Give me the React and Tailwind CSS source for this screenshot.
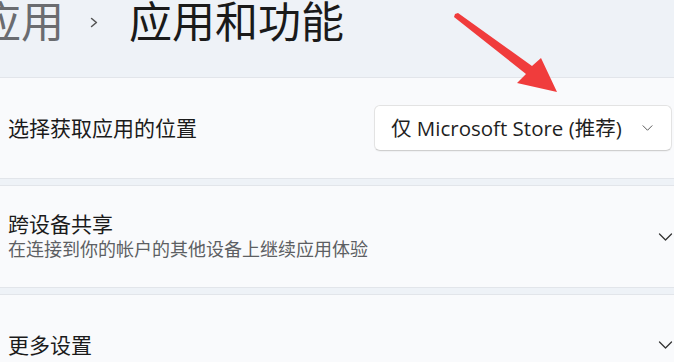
import React from "react";

const Chevron = ({ className }) => (
  <svg viewBox="0 0 14 8" className={className} fill="none">
    <polyline points="1,1 7,7 13,1" stroke="currentColor" strokeWidth="1.3" strokeLinecap="round" strokeLinejoin="round" />
  </svg>
);

const App = () => {
  const font = { fontFamily: '"Open Sans", "Noto Sans CJK SC", sans-serif' };

  return (
    <div
      className="relative w-[674px] h-[362px] overflow-hidden bg-[#eef2f7] text-[#1b1b1b]"
      style={font}
    >
      {/* header / breadcrumb */}
      <div className="h-[77px] flex items-start -ml-[22px]">
        <span className="text-[43px] leading-[44px] text-[#6a6c70]">应用</span>
        <svg viewBox="0 0 10 12" className="w-[8px] h-[11px] ml-[26px] mr-[31px] mt-[17px] text-[#555]" fill="none">
          <polyline points="2,1 8,6 2,11" stroke="currentColor" strokeWidth="2" strokeLinecap="round" strokeLinejoin="round" />
        </svg>
        <span className="text-[43px] leading-[44px] text-[#1a1a1a]">应用和功能</span>
      </div>

      {/* setting cards */}
      <div className="flex flex-col gap-[6px] w-[700px] -ml-[8px]">
        <div className="h-[102px] flex items-center bg-[#f9fafc] border border-[#e2e5ea] rounded-md pl-[15px]">
          <span className="text-[21px] leading-[26px]">选择获取应用的位置</span>
          <div className="ml-auto mr-[19px] w-[298px] h-[46px] flex items-center bg-white border border-[#e3e3e3] border-b-[#cfcfcf] rounded-md pl-[16px] pr-[18px] shadow-[0_1px_1px_rgba(0,0,0,0.04)]">
            <span className="text-[20.5px] leading-[24px] text-[#1f1f1f]">仅 Microsoft Store (推荐)</span>
            <Chevron className="ml-auto w-[11px] h-[6px] text-[#555]" />
          </div>
        </div>

        <div className="h-[103px] flex items-center bg-[#f9fafc] border border-[#e2e5ea] rounded-md pl-[15px]">
          <div className="flex flex-col">
            <span className="text-[21px] leading-[24px]">跨设备共享</span>
            <span className="text-[18px] leading-[24px] text-[#5d5f63] mt-[1px]">在连接到你的帐户的其他设备上继续应用体验</span>
          </div>
          <Chevron className="ml-auto mr-[18px] w-[15px] h-[8px] text-[#333]" />
        </div>

        <div className="h-[102px] flex items-center bg-[#f9fafc] border border-[#e2e5ea] rounded-md pl-[15px]">
          <span className="text-[21px] leading-[26px]">更多设置</span>
          <Chevron className="ml-auto mr-[18px] w-[15px] h-[8px] text-[#333]" />
        </div>
      </div>

      {/* red annotation arrow */}
      <svg className="absolute left-0 top-0 w-[674px] h-[362px] pointer-events-none" viewBox="0 0 674 362">
        <polygon
          points="455,14 458,13 532,66 541,58 557,92 517,83 526,74 454,17"
          fill="#f03c3c"
        />
      </svg>
    </div>
  );
};

export default App;
